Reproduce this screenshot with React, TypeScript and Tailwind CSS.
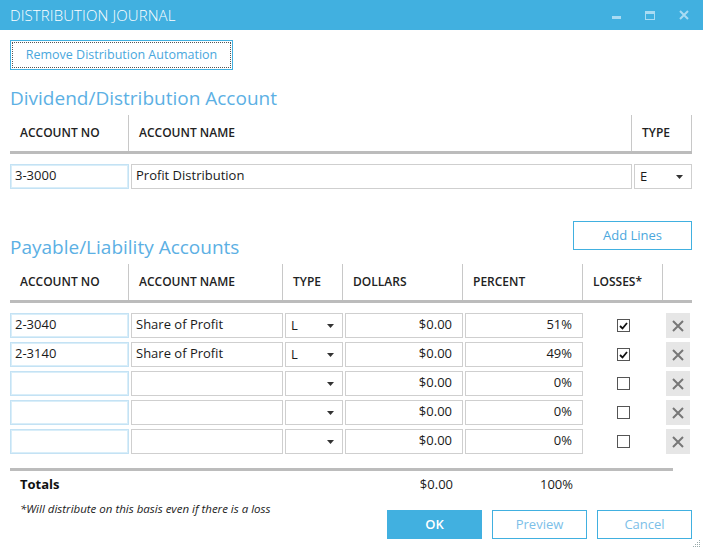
import { ReactNode } from 'react';

const font = { fontFamily: '"Open Sans", "Liberation Sans", sans-serif' };

function Arrow() {
  return (
    <svg width="7" height="4" viewBox="0 0 7 4" className="shrink-0">
      <path d="M0 0 L7 0 L3.5 4 Z" fill="#333" />
    </svg>
  );
}

function Field({
  children,
  focus,
  right,
  className = '',
}: {
  children?: ReactNode;
  focus?: boolean;
  right?: boolean;
  className?: string;
}) {
  return (
    <div
      className={
        'h-[25px] flex items-center pb-[2px] px-[4px] text-[13px] text-[#1a1a1a] bg-white border ' +
        (focus ? 'border-[#c4e2f4] shadow-[inset_0_0_0_1px_#d9eef9] ' : 'border-[#cfcfcf] ') +
        (right ? 'justify-end pr-[10px] ' : '') +
        className
      }
    >
      {children}
    </div>
  );
}

function Select({ value }: { value?: string }) {
  return (
    <div className="ml-[2px] h-[25px] flex items-center justify-between pl-[5px] pr-[8px] text-[13px] text-[#1a1a1a] bg-white border border-[#cfcfcf]">
      <span>{value}</span>
      <Arrow />
    </div>
  );
}

function Check({ on }: { on: boolean }) {
  return (
    <div className="w-[13px] h-[13px] border border-[#555] bg-white flex items-center justify-center">
      {on && (
        <svg width="9" height="8" viewBox="0 0 9 8">
          <path d="M1 4 L3.5 6.5 L8 1" stroke="#111" strokeWidth="1.8" fill="none" />
        </svg>
      )}
    </div>
  );
}

function HeadCell({ label, border = true }: { label?: string; border?: boolean }) {
  return (
    <div
      className={
        'h-[36px] flex items-center pl-[10px] text-[12px] font-semibold text-[#222] ' +
        (border ? 'border-r border-[#c8c8c8]' : '')
      }
    >
      {label}
    </div>
  );
}

const rows = [
  { no: '2-3040', name: 'Share of Profit', type: 'L', pct: '51%', on: true },
  { no: '2-3140', name: 'Share of Profit', type: 'L', pct: '49%', on: true },
  { no: '', name: '', type: '', pct: '0%', on: false },
  { no: '', name: '', type: '', pct: '0%', on: false },
  { no: '', name: '', type: '', pct: '0%', on: false },
];

export default function App() {
  return (
    <div className="w-[703px] h-[550px] bg-white relative overflow-hidden" style={font}>
      {/* Title bar */}
      <div className="h-[30px] bg-[#41b0e0] flex items-center justify-between pl-[10px]">
        <span className="text-white text-[15px] font-light tracking-[0.1px]">DISTRIBUTION JOURNAL</span>
        <div className="flex items-center h-full">
          <div className="w-[34px] h-full flex items-center justify-center">
            <div className="w-[9px] h-[3px] bg-[#a9dbf3] mt-[4px]" />
          </div>
          <div className="w-[34px] h-full flex items-center justify-center">
            <div className="w-[10px] h-[9px] border border-[#a9dbf3] border-t-[3px]" />
          </div>
          <div className="w-[34px] h-full flex items-center justify-center mr-[2px]">
            <svg width="10" height="10" viewBox="0 0 10 10">
              <path d="M1 1 L9 9 M9 1 L1 9" stroke="#a9dbf3" strokeWidth="2" />
            </svg>
          </div>
        </div>
      </div>

      <div className="px-[10px]">
        {/* Remove automation */}
        <div className="mt-[10px] w-[223px] h-[30px] border border-[#41b0e0] p-[1px]">
          <div className="w-full h-full border border-dotted border-[#555] flex items-center justify-center text-[12.5px] text-[#4aa7dd]">
            Remove Distribution Automation
          </div>
        </div>

        {/* Dividend */}
        <div className="mt-[17px] text-[19px] leading-[22px] text-[#5cb0e4]">Dividend/Distribution Account</div>
        <div className="mt-[6px] w-[682px]">
          <div className="grid grid-cols-[119px_503px_60px]">
            <HeadCell label="ACCOUNT NO" />
            <HeadCell label="ACCOUNT NAME" />
            <HeadCell label="TYPE" />
          </div>
          <div className="h-[3px] bg-[#bcbcbc]" />
          <div className="mt-[10px] grid grid-cols-[119px_503px_60px]">
            <Field focus>3-3000</Field>
            <Field className="ml-[2px]">Profit Distribution</Field>
            <Select value="E" />
          </div>
        </div>

        {/* Payable */}
        <div className="mt-[32px] flex items-end justify-between w-[682px]">
          <div className="text-[19px] leading-[22px] text-[#5cb0e4] mb-[-8px]">Payable/Liability Accounts</div>
          <div className="w-[119px] h-[29px] border border-[#41b0e0] flex items-center justify-center text-[13px] text-[#4aa7dd]">
            Add Lines
          </div>
        </div>
        <div className="mt-[14px] w-[682px]">
          <div className="grid grid-cols-[119px_154px_60px_120px_120px_80px_29px]">
            <HeadCell label="ACCOUNT NO" />
            <HeadCell label="ACCOUNT NAME" />
            <HeadCell label="TYPE" />
            <HeadCell label="DOLLARS" />
            <HeadCell label="PERCENT" />
            <HeadCell label="LOSSES*" />
            <HeadCell border={false} />
          </div>
          <div className="h-[3px] bg-[#bcbcbc]" />
          <div className="mt-[10px] flex flex-col gap-[4px]">
            {rows.map((r, i) => (
              <div key={i} className="grid grid-cols-[119px_154px_60px_120px_120px_80px_29px]">
                <Field focus>{r.no}</Field>
                <Field className="ml-[2px]">{r.name}</Field>
                <Select value={r.type} />
                <Field className="ml-[2px]" right>
                  $0.00
                </Field>
                <Field className="ml-[2px]" right>
                  {r.pct}
                </Field>
                <div className="flex items-center justify-center">
                  <Check on={r.on} />
                </div>
                <div className="flex items-center pl-[3px]">
                  <div className="w-[24px] h-[25px] bg-[#e6e6e6] flex items-center justify-center">
                    <svg width="12" height="12" viewBox="0 0 12 12">
                      <path d="M1 1 L11 11 M11 1 L1 11" stroke="#777" strokeWidth="2" />
                    </svg>
                  </div>
                </div>
              </div>
            ))}
          </div>
        </div>

        {/* Totals */}
        <div className="mt-[14px] w-[663px] h-[3px] bg-[#bcbcbc]" />
        <div className="grid grid-cols-[333px_120px_120px] h-[28px] items-center">
          <div className="pl-[10px] text-[13px] font-bold text-[#111]">Totals</div>
          <div className="text-right pr-[10px] text-[13px] text-[#1a1a1a]">$0.00</div>
          <div className="text-right pr-[10px] text-[13px] text-[#1a1a1a]">100%</div>
        </div>
        <div className="flex items-start justify-between w-[682px]">
          <div className="pl-[10px] mt-[2px] leading-[16px] text-[11.5px] italic text-[#222]">
            *Will distribute on this basis even if there is a loss
          </div>
          <div className="flex gap-[10px] mt-[11px]">
            <div className="w-[95px] h-[29px] bg-[#41b0e0] flex items-center justify-center text-[13px] font-semibold text-white">
              OK
            </div>
            <div className="w-[95px] h-[29px] border border-[#41b0e0] flex items-center justify-center text-[13px] text-[#7cc0e8]">
              Preview
            </div>
            <div className="w-[95px] h-[29px] border border-[#41b0e0] flex items-center justify-center text-[13px] text-[#7cc0e8]">
              Cancel
            </div>
          </div>
        </div>
      </div>

      {/* resize grip */}
      <svg className="absolute right-[2px] bottom-[2px]" width="10" height="10" viewBox="0 0 10 10">
        {[
          [8, 2],
          [6, 4],
          [8, 4],
          [4, 6],
          [6, 6],
          [8, 6],
          [2, 8],
          [4, 8],
          [6, 8],
          [8, 8],
        ].map(([x, y], i) => (
          <rect key={i} x={x} y={y} width="1" height="1" fill="#9aa" />
        ))}
      </svg>
    </div>
  );
}
